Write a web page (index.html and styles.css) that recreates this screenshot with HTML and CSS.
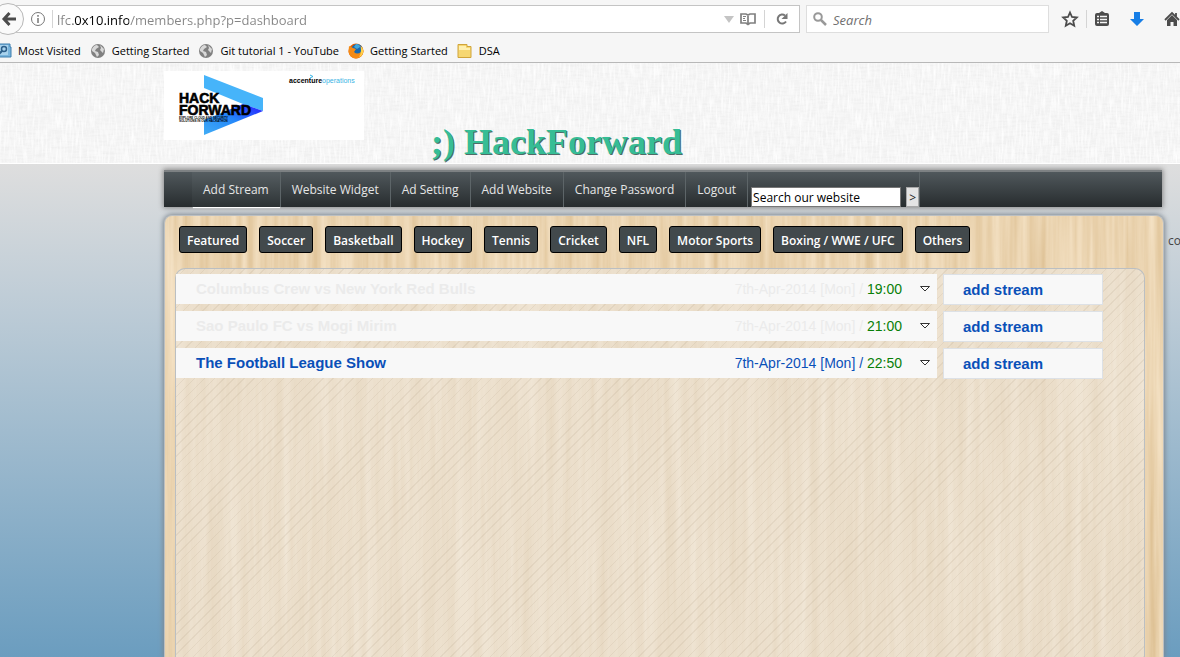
FILE: index.html
```html
<!DOCTYPE html>
<html lang="en">
<head>
<meta charset="utf-8">
<title>HackForward</title>
<link rel="stylesheet" href="styles.css">
</head>
<body>
<header class="browser">
  <div class="toolbar">
    <button class="back" aria-label="Back"><svg width="16" height="16" viewBox="0 0 16 16"><path d="M8.500 2 3 8l5.500 6M3.500 8H15" fill="none" stroke="#4c4c4c" stroke-width="3"/></svg></button>
    <div class="address">
      <svg width="16" height="16" viewBox="0 0 16 16" fill="none" stroke="#777"><circle cx="8" cy="8" r="6.500"/><path d="M8 7v5M8 4v1.700" stroke-width="1.500"/></svg>
      <span class="rule"></span>
      <input class="url" type="text" aria-label="Address" value="lfc.0x10.info/members.php?p=dashboard">
      <svg width="10" height="8" viewBox="0 0 10 8"><path d="M0 1h10L5 8z" fill="#c4c4c4"/></svg>
      <svg width="16" height="14" viewBox="0 0 16 14" fill="none" stroke="#808080"><path d="M1 2h5l2 1 2-1h5v9h-5l-2 1.500L6 11H1zM8 3v9" stroke-width="1.700"/><path d="M3 4.500h3M3 6.500h2M3 8.500h3"/></svg>
      <span class="rule"></span>
      <button class="plain" aria-label="Reload"><svg width="14" height="14" viewBox="0 0 14 14"><path d="M11 9.500A4.500 4.500 0 1 1 10 3.500" fill="none" stroke="#777" stroke-width="2"/><path d="M12.500 1v6h-6z" fill="#777"/></svg></button>
    </div>
    <div class="finder">
      <svg width="14" height="14" viewBox="0 0 14 14" fill="none" stroke="#999"><circle cx="5" cy="5" r="3.800" stroke-width="2"/><path d="m8 8 5 5" stroke-width="2.500"/></svg>
      <input type="text" aria-label="Search" placeholder="Search">
    </div>
    <div class="tools">
      <button class="plain" aria-label="Bookmark this page"><svg width="18" height="18" viewBox="0 0 18 18"><path d="m9 2.500 2 4.500 4.800.5-3.600 3.300 1 4.900L9 13.200l-4.200 2.500 1-4.900L2.200 7.500 7 7z" fill="none" stroke="#4c4c4c" stroke-width="1.800"/></svg></button>
      <span class="rule"></span>
      <button class="plain" aria-label="Bookmarks"><svg width="16" height="16" viewBox="0 0 16 16"><path d="M3 2h2l3-2 3 2h2q2 0 2 2v9q0 2-2 2H3q-2 0-2-2V4q0-2 2-2z" fill="#4c4c4c"/><path d="M3 5.500h2M6 5.500h7M3 8.500h2M6 8.500h7M3 11.500h2M6 11.500h7" stroke="#f6f6f6" stroke-width="1.700"/></svg></button>
      <button class="plain wide" aria-label="Downloads"><svg width="14" height="16" viewBox="0 0 14 16"><path d="M4 1h6v7h4l-7 7-7-7h4z" fill="#177ee6"/></svg></button>
      <button class="plain" aria-label="Home"><svg width="16" height="16" viewBox="0 0 16 16"><path d="m1 9 7-7 7 7M12 2v4" fill="none" stroke="#4c4c4c" stroke-width="1.800"/><path d="m3 9 5-5 5 5v6H9.500v-4h-3v4H3z" fill="#4c4c4c"/></svg></button>
    </div>
  </div>
  <nav class="bookmarks" aria-label="Bookmarks">
    <a href="#"><svg width="16" height="16" viewBox="0 0 16 16"><path d="M0 1h14v3h1v10H0z" fill="#78b4dc" stroke="#3f7fae"/><path d="M1 2h11v10H1z" fill="#a8d2ed"/><circle cx="8" cy="6" r="2.500" fill="none" stroke="#2d5f8a" stroke-width="1.500"/><path d="m6 8-4 4" stroke="#2d5f8a" stroke-width="2"/></svg>Most Visited</a>
    <a href="#"><svg width="16" height="16" viewBox="0 0 16 16"><circle cx="8" cy="8" r="7" fill="#808080"/><path d="M2 6q2-4 5-4l2 2-3 2-1 2 3 1 1 3-2 2-2-4-3-2zM10 2l4 4-1 4-3-3 1-2z" fill="#d8d8d8"/></svg>Getting Started</a>
    <a href="#"><svg width="16" height="16" viewBox="0 0 16 16"><circle cx="8" cy="8" r="7" fill="#808080"/><path d="M2 6q2-4 5-4l2 2-3 2-1 2 3 1 1 3-2 2-2-4-3-2zM10 2l4 4-1 4-3-3 1-2z" fill="#d8d8d8"/></svg>Git tutorial 1 - YouTube</a>
    <a href="#"><svg width="16" height="16" viewBox="0 0 16 16"><circle cx="8" cy="8" r="7.500" fill="#e66000"/><circle cx="9" cy="6.500" r="5.500" fill="#1768b0"/><path d="M8 1q4 0 4 3l-3 2-3-2z" fill="#42a8dc"/><path d="M1 3q2 1 4 2l3 1-2 3q3 3 7 0 1-3-.500-6 4 3 2.500 7-2 5-7 5.500Q2 15 .500 9z" fill="#f48a16"/><path d="M12.500 3q4 3 2.500 7-1 3-4 4 3-4 1.500-11z" fill="#ffd24a"/></svg>Getting Started</a>
    <a href="#"><svg width="16" height="16" viewBox="0 0 16 16"><path d="M1 1.500h9v2h4v11H1z" fill="#f6d772" stroke="#d0a43a"/><path d="M2 3h7v2h4v2H2z" fill="#fff0b0"/></svg>DSA</a>
  </nav>
</header>

<div class="masthead">
  <svg class="logo" width="200" height="69" viewBox="0 0 200 69" role="img" aria-label="Hack Forward, accenture operations">
    <defs><linearGradient id="blade" x1="0" y1="1" x2="1" y2="0"><stop offset="0" stop-color="#42adf5"/><stop offset=".5" stop-color="#2487fa"/><stop offset="1" stop-color="#2818ff"/></linearGradient></defs>
    <path d="M0 0h200v69H0z" fill="#fff"/>
    <path d="M40 4 99 27v13L79 33 40 17z" fill="#46b4fa"/>
    <path d="M40 49 79 33l20 7-59 24z" fill="url(#blade)"/>
    <g font-family="Liberation Sans, Arial, sans-serif" font-weight="bold">
      <text font-size="14" stroke="#000" stroke-width=".6"><tspan x="15" y="32">HACK</tspan><tspan x="15" y="44">FORWARD</tspan></text>
      <text font-size="3"><tspan x="15" y="48">EXPLORE CLOUD AND SECURITY</tspan><tspan x="15" y="51">SOLUTIONS IN OUR HACKATHON</tspan></text>
      <text x="125" y="12" font-size="7">accenture<tspan fill="#38b4e4" font-weight="normal">operations</tspan></text>
    </g>
    <path d="m146 4 3 1.500-3 1.500" fill="none" stroke="#38b4e4"/>
  </svg>
  <h1>;) HackForward</h1>
</div>

<main class="site">
  <nav class="menu" aria-label="Site">
    <a class="current" href="#">Add Stream</a>
    <a href="#">Website Widget</a>
    <a href="#">Ad Setting</a>
    <a href="#">Add Website</a>
    <a href="#">Change Password</a>
    <a href="#">Logout</a>
    <form class="lookup">
      <input type="text" aria-label="Search our website" value="Search our website">
      <button type="button" aria-label="Go">&gt;</button>
    </form>
  </nav>

  <div class="board">
    <span class="aside">co</span>
    <nav class="sports" aria-label="Sports">
      <a href="#">Featured</a>
      <a href="#">Soccer</a>
      <a href="#">Basketball</a>
      <a href="#">Hockey</a>
      <a href="#">Tennis</a>
      <a href="#">Cricket</a>
      <a href="#">NFL</a>
      <a href="#">Motor Sports</a>
      <a href="#">Boxing / WWE / UFC</a>
      <a href="#">Others</a>
    </nav>
    <section class="events">
      <div class="row">
        <div class="event past"><span class="name">Columbus Crew vs New York Red Bulls</span><span class="date">7th-Apr-2014 [Mon] / <time>19:00</time></span><svg width="12" height="8" viewBox="0 0 12 8"><path d="M1.500 1.500h9L6 6z" fill="#fff" stroke="#333"/></svg></div>
        <a class="add" href="#">add stream</a>
      </div>
      <div class="row">
        <div class="event past"><span class="name">Sao Paulo FC vs Mogi Mirim</span><span class="date">7th-Apr-2014 [Mon] / <time>21:00</time></span><svg width="12" height="8" viewBox="0 0 12 8"><path d="M1.500 1.500h9L6 6z" fill="#fff" stroke="#333"/></svg></div>
        <a class="add" href="#">add stream</a>
      </div>
      <div class="row">
        <div class="event"><span class="name">The Football League Show</span><span class="date">7th-Apr-2014 [Mon] / <time>22:50</time></span><svg width="12" height="8" viewBox="0 0 12 8"><path d="M1.500 1.500h9L6 6z" fill="#fff" stroke="#333"/></svg></div>
        <a class="add" href="#">add stream</a>
      </div>
    </section>
  </div>
</main>
</body>
</html>
```

FILE: styles.css
```css
* { box-sizing: border-box; }
html { height: 100%; }
body {
  margin: 0;
  min-height: 100%;
  display: flex;
  flex-direction: column;
  overflow: hidden;
  font-family: "Open Sans", "Noto Sans", sans-serif;
  font-size: 12px;
}
a { text-decoration: none; color: inherit; }
svg { flex: none; }
input, button { font: inherit; margin: 0; border-radius: 0; }

/* Browser chrome */
.browser { background: #f6f6f6; border-bottom: 1px solid #b8b8b8; padding-top: 5px; }
.toolbar { display: flex; align-items: center; height: 28px; }
.back {
  flex: none;
  width: 32px;
  height: 32px;
  margin-left: -8px;
  padding: 0 0 0 1px;
  display: flex;
  align-items: center;
  justify-content: center;
  border: 1px solid #b8b8b8;
  border-radius: 16px;
  background: #fafafa;
  z-index: 1;
}
.address {
  flex: 1;
  height: 28px;
  margin-left: -8px;
  padding: 0 10px 0 13px;
  display: flex;
  align-items: center;
  gap: 6px;
  background: #fff;
  border: 1px solid #c4c4c4;
}
.rule { flex: none; width: 1px; height: 18px; background: #d4d4d4; }
.url {
  flex: 1;
  min-width: 0;
  margin-left: -2px;
  padding: 2px 0 0;
  border: 0;
  outline: 0;
  font-size: 13px;
  color: transparent;
  background: linear-gradient(90deg, #858585 16px, #000 16px 72px, #858585 72px);
  background-clip: text;
  -webkit-background-clip: text;
}
.plain { padding: 0; border: 0; background: none; display: flex; }
.address .plain { padding: 0 0 0 4px; }
.address .rule:nth-last-child(2) { margin-left: 2px; }
.finder {
  flex: none;
  width: 243px;
  height: 28px;
  margin-left: 6px;
  padding: 0 6px;
  display: flex;
  align-items: center;
  gap: 6px;
  background: #fff;
  border: 1px solid #dedede;
}
.finder input { flex: 1; min-width: 0; padding: 2px 0 0; border: 0; background: none; font-size: 13px; font-style: italic; }
.finder input::placeholder { color: #707070; }
.tools { flex: none; width: 131px; padding-left: 12px; display: flex; align-items: center; gap: 7px; }
.tools .wide { margin: 0 13px; }
.bookmarks { display: flex; align-items: center; gap: 9px; height: 29px; padding-top: 6px; margin-left: -4px; font-size: 11px; }
.bookmarks a { display: flex; align-items: center; gap: 6px; white-space: nowrap; color: #000; }

/* Masthead */
.masthead {
  height: 101px;
  padding: 8px 16px 0 164px;
  display: flex;
  gap: 67px;
  border-bottom: 1px solid #fff;
  background: #f5f5f5 url("data:image/svg+xml,%3Csvg xmlns='http://www.w3.org/2000/svg' width='400' height='200'%3E%3Cfilter id='a' x='0' y='0' width='100%25' height='100%25'%3E%3CfeTurbulence type='fractalNoise' baseFrequency='.06 .5' numOctaves='2'/%3E%3CfeColorMatrix values='0 0 0 0 .4 0 0 0 0 .4 0 0 0 0 .4 .2 0 0 0 -.08'/%3E%3C/filter%3E%3Cfilter id='b' x='0' y='0' width='100%25' height='100%25'%3E%3CfeTurbulence type='fractalNoise' baseFrequency='.5 .06' numOctaves='2'/%3E%3CfeColorMatrix values='0 0 0 0 1 0 0 0 0 1 0 0 0 0 1 2 0 0 0 -.8'/%3E%3C/filter%3E%3Crect width='400' height='200' filter='url(%23a)'/%3E%3Crect width='400' height='200' filter='url(%23b)'/%3E%3C/svg%3E");
}
.masthead h1 {
  margin: 51px 0 0;
  font: bold 36px/40px "Liberation Serif", serif;
  color: #36bd95;
  text-shadow: 1px 1px 0 #4f6b68;
}

/* Page */
.site {
  flex: 1;
  display: flex;
  flex-direction: column;
  padding: 6px 16px 0 164px;
  background: linear-gradient(#dedede, #bccbd6 30%, #6b9dbf);
}
.menu {
  display: flex;
  margin-right: 2px;
  height: 37px;
  padding-left: 28px;
  border-top: 2px solid #7d8183;
  background: linear-gradient(#50585c, #272c2e);
  box-shadow: 0 0 5px 1px #888;
  color: #e6e6e6;
}
.menu a {
  padding: 0 11px;
  line-height: 35px;
  white-space: nowrap;
  border-right: 1px solid #5d6568;
}
.menu .current { background: linear-gradient(#565e62, #2d3335); box-shadow: 0 2px 1px -1px #fff; }
.lookup { display: flex; align-items: flex-end; gap: 5px; padding-left: 3px; border-right: 1px solid #5d6568; }
.lookup input { width: 150px; height: 20px; padding: 0 1px; border: 1px solid #777; background: #fff; color: #000; }
.lookup button { width: 13px; height: 20px; padding: 0; border: 1px solid #a8a8a8; background: #e4e4e4; color: #222; }
.board {
  position: relative;
  flex: 1;
  margin-top: 8px;
  padding: 10px 18px 0 10px;
  display: flex;
  flex-direction: column;
  border: 1px solid #bbbfc2;
  border-bottom: 0;
  border-radius: 8px 8px 0 0;
  box-shadow: 0 0 5px 1px #7d8790;
  background: #e9d2ae url("data:image/svg+xml,%3Csvg xmlns='http://www.w3.org/2000/svg' width='1200' height='700'%3E%3Cfilter id='a' x='0' y='0' width='100%25' height='100%25' color-interpolation-filters='sRGB'%3E%3CfeTurbulence type='fractalNoise' baseFrequency='.11 .004' numOctaves='4' seed='8'/%3E%3CfeColorMatrix values='.13 0 0 0 .855 .19 0 0 0 .735 .28 0 0 0 .55 0 0 0 0 1'/%3E%3C/filter%3E%3Crect width='1200' height='700' filter='url(%23a)'/%3E%3C/svg%3E");
}
.aside { position: absolute; left: 100%; top: 16px; margin-left: 5px; color: #444; }
.sports { display: flex; gap: 12px; padding-left: 4px; }
.sports a {
  height: 27px;
  padding: 0 7px;
  line-height: 27px;
  white-space: nowrap;
  border: 1px solid #000;
  border-radius: 3px;
  background: #42494c;
  color: #fff;
  font-weight: 600;
}
.events {
  flex: 1;
  display: flex;
  flex-direction: column;
  gap: 6px;
  margin-top: 15px;
  padding: 5px 41px 0 0;
  border: 1px solid #bbbfc2;
  border-bottom: 0;
  border-radius: 10px 10px 0 0;
  background: repeating-linear-gradient(135deg, #0000 0 6px, #a08c7020 6px 7px), #ece5dca0;
  font: 15px/30px "Liberation Sans", Arial, sans-serif;
  color: #0a50b8;
}
.row { display: flex; gap: 6px; align-items: flex-start; }
.event { flex: 1; display: flex; align-items: center; height: 30px; padding: 0 6px 0 20px; background: #f8f8f8; }
.name { flex: 1; font-weight: bold; }
.past { color: #ebebeb; }
.date { margin-right: 17px; font-size: 14px; }
.event time { color: #087f08; }
.add { width: 160px; padding-left: 19px; height: 31px; line-height: 29px; border: 1px solid #dde1e6; background: #f8f8f8; font-weight: bold; }
```
